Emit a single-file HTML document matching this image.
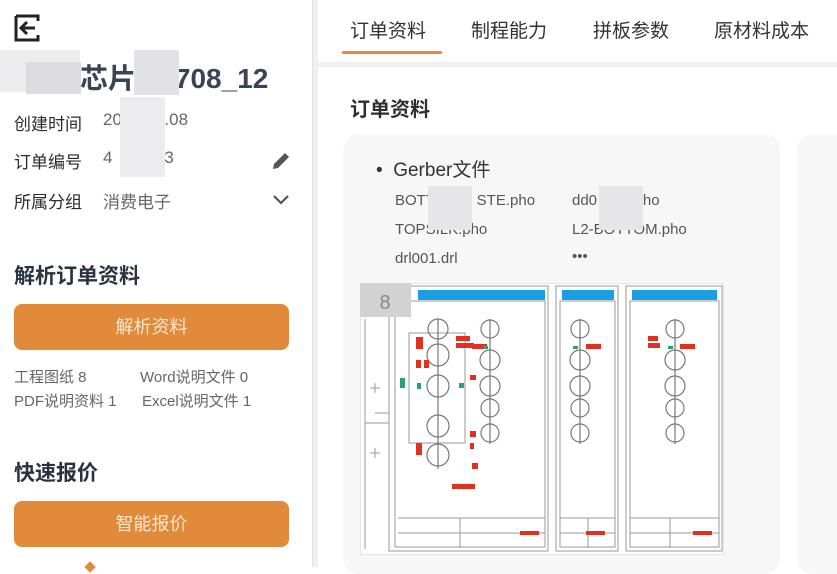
<!DOCTYPE html>
<html><head><meta charset="utf-8"><style>
*{margin:0;padding:0;box-sizing:border-box}
body{width:837px;height:567px;overflow:hidden;background:#fff;font-family:"Liberation Sans","Noto Sans CJK SC",sans-serif;position:relative;color:#333}
.a{position:absolute;white-space:nowrap}
.lbl{font-size:17px;color:#2b2b2b}
.val{font-size:17px;color:#666}
.btn{position:absolute;left:14px;width:275px;height:46px;background:#e08a3a;border-radius:8px;color:#fbe7d3;font-size:18px;text-align:center;line-height:46px}
.sm{font-size:15px;color:#666}
.tab{font-size:19px;color:#333;top:16px}
.blur{position:absolute;background:#e6e6e8}
</style></head><body>
<svg class="a" style="left:13px;top:13px" width="30" height="30" viewBox="0 0 30 30"><path d="M3 3h22v5M25 22v5H3V3" fill="none" stroke="#222" stroke-width="3"/><path d="M22 15H9M14 9l-6 6 6 6" fill="none" stroke="#222" stroke-width="3"/></svg>
<div class="a" style="left:80px;top:57px;font-size:28px;font-weight:bold;color:#3a4458">芯片2&nbsp;&nbsp;&nbsp;708_12</div>
<div class="blur" style="left:0;top:50px;width:80px;height:42px;background:#ececee"></div>
<div class="blur" style="left:26px;top:62px;width:55px;height:32px;background:#dcdce0"></div>
<div class="blur" style="left:134px;top:50px;width:45px;height:45px;background:#e2e2e6"></div>
<div class="a lbl" style="left:14px;top:110px">创建时间</div>
<div class="a val" style="left:103px;top:110px">20&nbsp;&nbsp;&nbsp;&nbsp;&nbsp;&nbsp;&nbsp;&nbsp;&nbsp;.08</div>
<div class="a lbl" style="left:14px;top:148px">订单编号</div>
<div class="a val" style="left:103px;top:148px">4&nbsp;&nbsp;&nbsp;&nbsp;&nbsp;&nbsp;&nbsp;&nbsp;&nbsp;33</div>
<div class="blur" style="left:120px;top:97px;width:45px;height:80px;background:#ececee"></div>
<svg class="a" style="left:271px;top:151px" width="20" height="20" viewBox="0 0 20 20"><path d="M2 18l1-5L14 2l4 4L7 17z" fill="#555"/></svg>
<div class="a lbl" style="left:14px;top:188px">所属分组</div>
<div class="a val" style="left:103px;top:188px">消费电子</div>
<svg class="a" style="left:272px;top:194px" width="18" height="12" viewBox="0 0 18 12"><path d="M2 2l7 7 7-7" fill="none" stroke="#555" stroke-width="2.2"/></svg>
<div class="a" style="left:14px;top:260px;font-size:21px;font-weight:bold;color:#2a3242">解析订单资料</div>
<div class="btn" style="top:304px">解析资料</div>
<div class="a sm" style="left:14px;top:366px">工程图纸 8</div>
<div class="a sm" style="left:140px;top:366px">Word说明文件 0</div>
<div class="a sm" style="left:14px;top:390px">PDF说明资料 1</div>
<div class="a sm" style="left:142px;top:390px">Excel说明文件 1</div>
<div class="a" style="left:14px;top:457px;font-size:21px;font-weight:bold;color:#2a3242">快速报价</div>
<div class="btn" style="top:501px">智能报价</div>
<div class="a" style="left:86px;top:563px;width:8px;height:8px;background:#e08a3a;transform:rotate(45deg)"></div>
<div class="a" style="left:312px;top:0;width:6px;height:567px;background:#f0f0f2;border-left:1px solid #e4e4e6"></div>
<div class="a tab" style="left:350px">订单资料</div>
<div class="a tab" style="left:471px">制程能力</div>
<div class="a tab" style="left:593px">拼板参数</div>
<div class="a tab" style="left:714px">原材料成本</div>
<div class="a" style="left:342px;top:51px;width:100px;height:3px;background:#e08a3a;border-radius:2px"></div>
<div class="a" style="left:318px;top:62px;width:519px;height:5px;background:#f0f0f2"></div>
<div class="a" style="left:350px;top:93px;font-size:20px;font-weight:bold;color:#2f2f2f">订单资料</div>
<div class="a" style="left:343px;top:134px;width:437px;height:440px;background:#f7f7f8;border-radius:16px"></div>
<div class="a" style="left:797px;top:134px;width:60px;height:440px;background:#f7f7f8;border-radius:16px"></div>
<div class="a" style="left:376px;top:155px;font-size:19px;color:#333">•&nbsp; Gerber文件</div>
<div class="a sm" style="left:395px;top:192px;color:#555">BOTT&nbsp;&nbsp;&nbsp;&nbsp;&nbsp;&nbsp;&nbsp;&nbsp;&nbsp;&nbsp;STE.pho</div>
<div class="a sm" style="left:572px;top:192px;color:#555">dd0&nbsp;&nbsp;&nbsp;&nbsp;&nbsp;&nbsp;&nbsp;&nbsp;&nbsp;pho</div>
<div class="a sm" style="left:395px;top:221px;color:#555">TOPSILK.pho</div>
<div class="a sm" style="left:572px;top:221px;color:#555">L2-BOTTOM.pho</div>
<div class="a sm" style="left:395px;top:250px;color:#555">drl001.drl</div>
<div class="a sm" style="left:572px;top:248px;color:#555">•••</div>
<div class="blur" style="left:428px;top:186px;width:44px;height:44px"></div>
<div class="blur" style="left:599px;top:186px;width:44px;height:44px"></div>
<svg class="a" style="left:360px;top:283px" width="364" height="272" viewBox="0 0 364 272">
<rect x="0" y="0" width="364" height="272" fill="#fff" stroke="#ccc"/>
<g fill="none" stroke="#999" stroke-width="1">
<rect x="29" y="3" width="159" height="265"/><rect x="35" y="18" width="150" height="246"/>
<rect x="196" y="3" width="62" height="265"/><rect x="200" y="18" width="55" height="246"/>
<rect x="266" y="3" width="96" height="265"/><rect x="270" y="18" width="89" height="246"/>
<path d="M5 36v230M15 130h14M5 140h24"/>
<path d="M38 235h147M38 250h147M200 235h55M200 250h55M270 235h89M270 250h89M100 235v30M228 235v30M310 235v30"/>
<path d="M10 105h10M15 100v10M10 170h10M15 165v10"/>
<rect x="49" y="50" width="56" height="110"/>
</g>
<g fill="none" stroke="#777" stroke-width="1.2">
<circle cx="78" cy="46" r="10"/><circle cx="78" cy="72" r="11"/><circle cx="78" cy="103" r="11"/><circle cx="78" cy="143" r="11"/><circle cx="78" cy="172" r="11"/>
<circle cx="130" cy="46" r="9"/><circle cx="130" cy="77" r="10"/><circle cx="130" cy="103" r="10"/><circle cx="130" cy="125" r="9"/><circle cx="130" cy="150" r="9"/>
<circle cx="220" cy="46" r="9"/><circle cx="220" cy="77" r="10"/><circle cx="220" cy="103" r="10"/><circle cx="220" cy="125" r="9"/><circle cx="220" cy="150" r="9"/>
<circle cx="315" cy="46" r="9"/><circle cx="315" cy="77" r="10"/><circle cx="315" cy="103" r="10"/><circle cx="315" cy="125" r="9"/><circle cx="315" cy="150" r="9"/>
<path d="M78 36v150M130 36v125M220 36v125M315 36v125"/>
</g>
<g fill="#1a9fe0"><rect x="58" y="7" width="127" height="10"/><rect x="202" y="7" width="52" height="10"/><rect x="272" y="7" width="85" height="10"/></g>
<g fill="#e03020"><rect x="56" y="54" width="7" height="12"/><rect x="96" y="53" width="14" height="5"/><rect x="96" y="60" width="18" height="5"/><rect x="56" y="77" width="5" height="8"/><rect x="64" y="77" width="5" height="8"/><rect x="112" y="61" width="15" height="5"/><rect x="110" y="92" width="6" height="5"/><rect x="226" y="61" width="15" height="5"/><rect x="288" y="53" width="10" height="5"/><rect x="288" y="60" width="12" height="5"/><rect x="320" y="61" width="15" height="5"/><rect x="110" y="148" width="6" height="6"/><rect x="110" y="160" width="4" height="6"/><rect x="56" y="160" width="6" height="12"/><rect x="112" y="180" width="6" height="6"/><rect x="92" y="201" width="23" height="5"/><rect x="160" y="248" width="19" height="4"/><rect x="226" y="248" width="19" height="4"/><rect x="333" y="248" width="19" height="4"/></g>
<g fill="#2aa070"><rect x="40" y="95" width="5" height="10"/><rect x="57" y="100" width="4" height="6"/><rect x="99" y="100" width="5" height="5"/><rect x="123" y="63" width="5" height="3"/><rect x="213" y="63" width="5" height="3"/><rect x="308" y="63" width="5" height="3"/></g>
<rect x="0" y="0" width="51" height="34" fill="#d2d2d2"/>
<text x="25" y="26" font-size="20" fill="#888" text-anchor="middle" font-family="Liberation Sans">8</text>
</svg>
</body></html>
